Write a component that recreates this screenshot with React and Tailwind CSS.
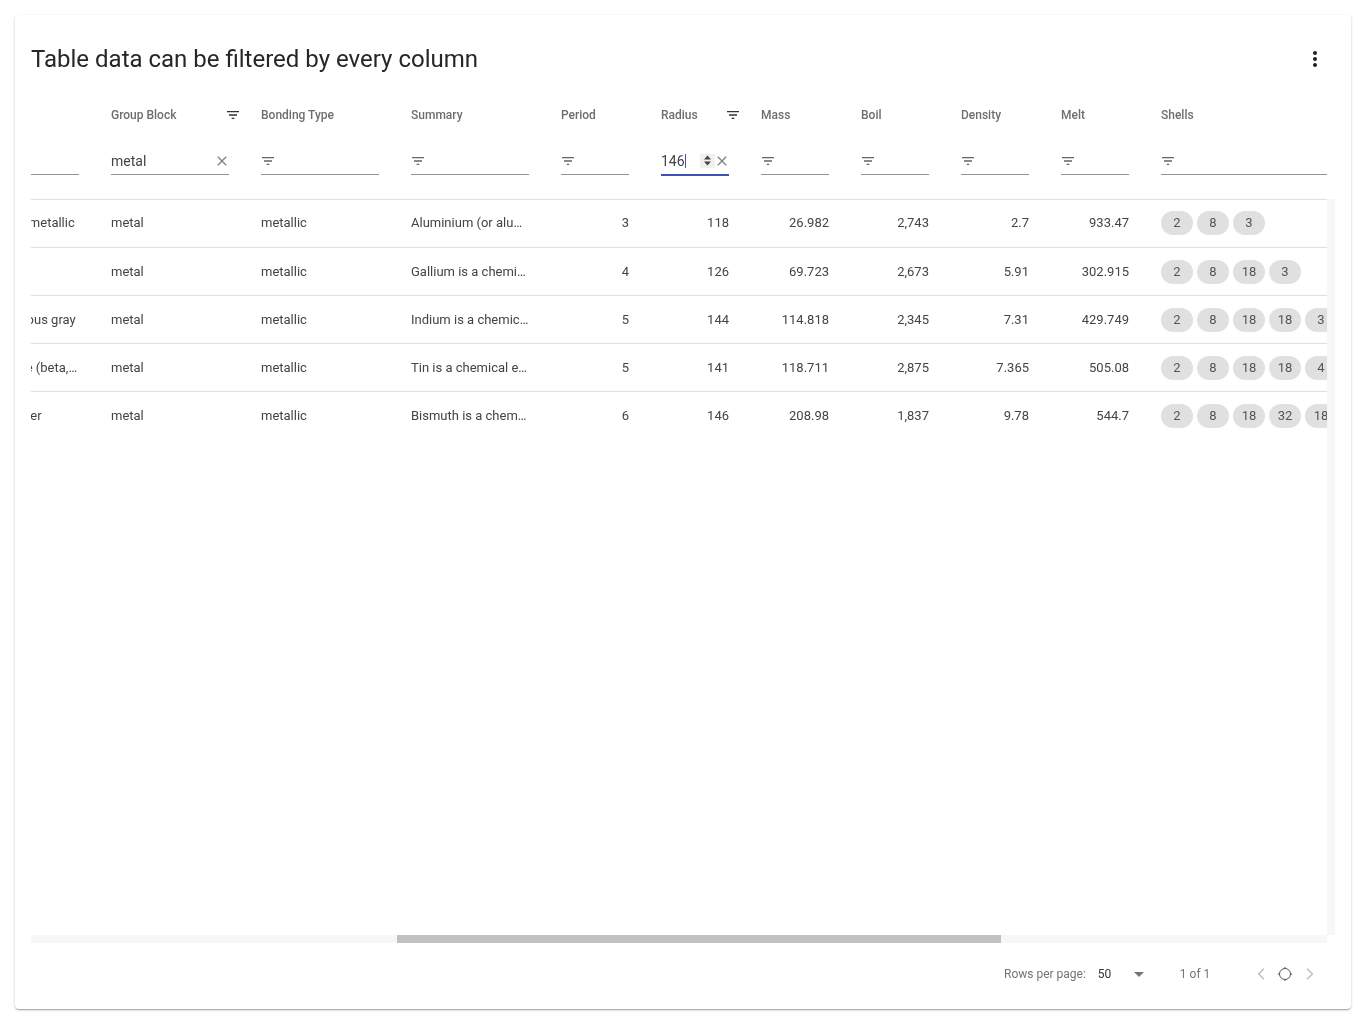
const columns = [
  { name: "", width: "w-[150px]", blank: true },
  { name: "Group Block", width: "w-[150px]", filter: "metal", active: true },
  { name: "Bonding Type", width: "w-[150px]" },
  { name: "Summary", width: "w-[150px]" },
  { name: "Period", width: "w-[100px]" },
  { name: "Radius", width: "w-[100px]", filter: "146", active: true, focused: true },
  { name: "Mass", width: "w-[100px]" },
  { name: "Boil", width: "w-[100px]" },
  { name: "Density", width: "w-[100px]" },
  { name: "Melt", width: "w-[100px]" },
  { name: "Shells", width: "w-[182px]" },
];

const rows = [
  { look: "silvery gray metallic", summary: "Aluminium (or aluminum) is a chemical element", period: 3, radius: 118, mass: "26.982", boil: "2,743", density: "2.7", melt: "933.47", shells: [2, 8, 3] },
  { look: "silvery blue", summary: "Gallium is a chemical element with symbol Ga", period: 4, radius: 126, mass: "69.723", boil: "2,673", density: "5.91", melt: "302.915", shells: [2, 8, 18, 3] },
  { look: "silvery lustrous gray", summary: "Indium is a chemical element with symbol In", period: 5, radius: 144, mass: "114.818", boil: "2,345", density: "7.31", melt: "429.749", shells: [2, 8, 18, 18, 3] },
  { look: "silvery-white (beta, β) or gray (alpha, α)", summary: "Tin is a chemical element with symbol Sn", period: 5, radius: 141, mass: "118.711", boil: "2,875", density: "7.365", melt: "505.08", shells: [2, 8, 18, 18, 4] },
  { look: "lustrous silver", summary: "Bismuth is a chemical element with symbol Bi", period: 6, radius: 146, mass: "208.98", boil: "1,837", density: "9.78", melt: "544.7", shells: [2, 8, 18, 32, 18, 5] },
];

function FilterIcon({ className }) {
  return (
    <svg viewBox="0 0 24 24" className={className} fill="currentColor">
      <path d="M10 18h4v-2h-4v2zM3 6v2h18V6H3zm3 7h12v-2H6v2z" />
    </svg>
  );
}

function ClearIcon() {
  return (
    <svg viewBox="0 0 24 24" className="-mr-px h-4 w-4 shrink-0 text-[#808080]" fill="currentColor">
      <path d="M19 6.41 17.59 5 12 10.59 6.41 5 5 6.41 10.59 12 5 17.59 6.41 19 12 13.41 17.59 19 19 17.59 13.41 12z" />
    </svg>
  );
}

function Spinner() {
  return (
    <div className="-mr-px flex h-[14px] w-[15px] shrink-0 items-center justify-center bg-[#f0f0f0]">
      <svg viewBox="0 0 9 11" className="h-[11px] w-[9px] text-[#444]" fill="currentColor">
        <path d="M4.5 0.5 8 4.5H1zM4.5 10.5 1 6.5h7z" />
      </svg>
    </div>
  );
}

function HeaderCell({ col }) {
  return (
    <div className={`${col.width} relative shrink-0 px-4 text-xs font-medium text-[#6e6e6e]`}>
      <span className="block leading-[14px]">{col.name}</span>
      {col.active && (
        <FilterIcon className="absolute right-[4px] top-[-1px] h-4 w-4 text-[#333]" />
      )}
    </div>
  );
}

function FilterCell({ col }) {
  const last = col.name === "Shells";
  if (col.blank) {
    return (
      <div className={`${col.width} shrink-0 px-4`}>
        <div className="h-[27px] border-b border-[#949494]" />
      </div>
    );
  }
  return (
    <div className={`${col.width} shrink-0 pl-4 ${last ? "" : "pr-4"}`}>
      <div
        className={`flex items-center ${col.focused ? "h-[28px] border-b-2 border-[#3f51b5] pb-px" : "h-[27px] border-b border-[#949494]"} text-sm text-[#444]`}
      >
        {col.filter ? (
          <>
            <span className={col.focused ? "" : "flex-1"}>{col.filter}</span>
            {col.focused && (
              <>
                <span className="h-[14px] w-px bg-[#3f51b5]" />
                <span className="flex-1" />
                <Spinner />
              </>
            )}
            <ClearIcon />
          </>
        ) : (
          <FilterIcon className="-ml-px h-4 w-4 text-[#666]" />
        )}
      </div>
    </div>
  );
}

function Chip({ value }) {
  return (
    <span className="flex h-6 w-8 shrink-0 items-center justify-center rounded-full bg-[#e0e0e0] text-[13px] text-[#555]">
      {value}
    </span>
  );
}

function Row({ row, last, first }) {
  return (
    <div className={`flex h-[48px] items-center text-[13px] text-[#444] ${last ? "" : "border-b border-[#e0e0e0]"} ${first ? "pb-[2px]" : ""}`}>
      <div className="w-[150px] shrink-0 truncate px-4">{row.look}</div>
      <div className="w-[150px] shrink-0 px-4">metal</div>
      <div className="w-[150px] shrink-0 px-4">metallic</div>
      <div className="w-[150px] shrink-0 truncate px-4">{row.summary}</div>
      <div className="w-[100px] shrink-0 px-4 text-right">{row.period}</div>
      <div className="w-[100px] shrink-0 px-4 text-right">{row.radius}</div>
      <div className="w-[100px] shrink-0 px-4 text-right">{row.mass}</div>
      <div className="w-[100px] shrink-0 px-4 text-right">{row.boil}</div>
      <div className="w-[100px] shrink-0 px-4 text-right">{row.density}</div>
      <div className="w-[100px] shrink-0 px-4 text-right">{row.melt}</div>
      <div className="flex w-[300px] shrink-0 gap-1 pl-4">
        {row.shells.map((s, i) => (
          <Chip key={i} value={s} />
        ))}
      </div>
    </div>
  );
}

export default function App() {
  return (
    <div className="h-[1024px] p-[15px] font-['Roboto',sans-serif] will-change-transform">
      <div className="flex h-[994px] flex-col rounded bg-white shadow-[0_1px_3px_0_rgba(0,0,0,0.2),0_1px_1px_0_rgba(0,0,0,0.14),0_2px_1px_-1px_rgba(0,0,0,0.12)]">
        <div className="flex h-[88px] shrink-0 items-center justify-between pl-4 pr-[24px]">
          <h1 className="text-2xl font-normal text-[#262626]">
            Table data can be filtered by every column
          </h1>
          <svg viewBox="0 0 24 24" className="h-6 w-6 text-[#212121]" fill="currentColor">
            <path d="M12 8c1.1 0 2-.9 2-2s-.9-2-2-2-2 .9-2 2 .9 2 2 2zm0 2c-1.1 0-2 .9-2 2s.9 2 2 2 2-.9 2-2-.9-2-2-2zm0 6c-1.1 0-2 .9-2 2s.9 2 2 2 2-.9 2-2-.9-2-2-2z" />
          </svg>
        </div>

        <div className="ml-4 mr-4 flex min-h-0 flex-1 flex-col">
          <div className="w-[1296px] overflow-hidden">
            <div className="ml-[-86px] w-[1500px]">
              <div className="flex pt-[5px]">
                {columns.map((col) => (
                  <HeaderCell key={col.name} col={col} />
                ))}
              </div>
              <div className="flex h-[77px] items-start pt-[26px]">
                {columns.map((col) => (
                  <FilterCell key={col.name} col={col} />
                ))}
              </div>
            </div>
          </div>

          <div className="flex min-h-0 flex-1">
            <div className="w-[1296px] overflow-hidden border-t border-[#e0e0e0]">
              <div className="ml-[-86px] w-[1600px]">
                {rows.map((row, i) => (
                  <Row key={row.radius} row={row} first={i === 0} last={i === rows.length - 1} />
                ))}
              </div>
            </div>
            <div className="w-2 bg-[#f7f7f7]" />
          </div>

          <div className="h-2 w-[1296px] shrink-0 bg-[#f7f7f7] pl-[366px]">
            <div className="h-2 w-[604px] bg-[#c1c1c1]" />
          </div>
        </div>

        <div className="flex h-[66px] shrink-0 items-center pb-1 pl-[989px] text-xs text-[#757575]">
          <span>Rows per page:</span>
          <span className="ml-3 w-[28px] text-[#333]">50</span>
          <svg viewBox="0 0 10 5" className="ml-[8px] h-[5px] w-[10px] text-[#757575]" fill="currentColor">
            <path d="M0 0h10L5 5z" />
          </svg>
          <span className="ml-[36px] w-[30px] whitespace-nowrap">1 of 1</span>
          <svg viewBox="0 0 8 12" className="ml-[47px] h-3 w-2 text-[#bdbdbd]" fill="none" stroke="currentColor" strokeWidth="1.4">
            <path d="M7 .8 1.6 6 7 11.2" />
          </svg>
          <svg viewBox="0 0 16 14" className="ml-[12px] h-[14px] w-4 text-[#555]" fill="none" stroke="currentColor" strokeWidth="1">
            <circle cx="8" cy="7" r="5.5" />
            <path d="M0.8 7h1.7M13.5 7h1.7M8 0v1.5M8 12.5V14" />
          </svg>
          <svg viewBox="0 0 8 12" className="ml-[13px] h-3 w-2 text-[#bdbdbd]" fill="none" stroke="currentColor" strokeWidth="1.4">
            <path d="M1 .8 6.4 6 1 11.2" />
          </svg>
        </div>
      </div>
    </div>
  );
}
